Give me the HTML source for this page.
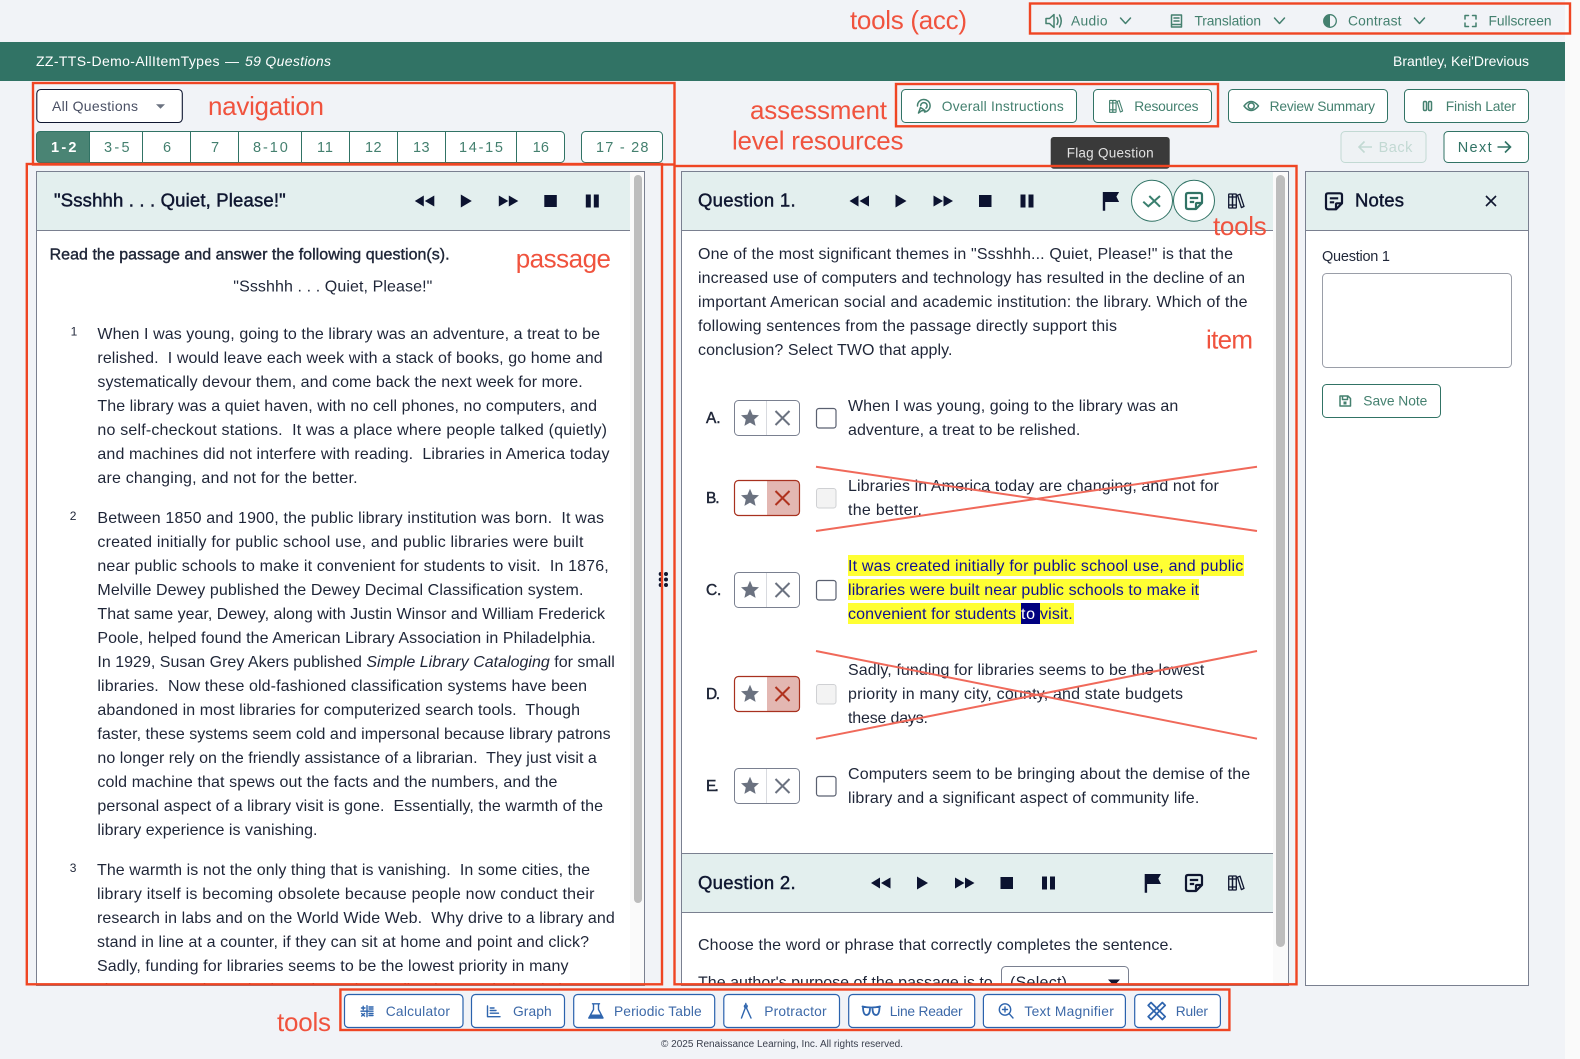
<!DOCTYPE html>
<html lang="en"><head><meta charset="utf-8"><title>ZZ-TTS-Demo-AllItemTypes</title>
<style>
html,body{margin:0;padding:0;background:#f1f3f7;overflow:hidden;width:1580px;height:1059px}
svg{display:block;font-family:"Liberation Sans",Arial,sans-serif}
text{white-space:pre}
.p{font-size:16px;fill:#1f2638}
.h{font-size:18.5px;fill:#0f1630;stroke:#0f1630;stroke-width:.45px}
.lb{font-size:15.5px;fill:#1f2638;stroke:#1f2638;stroke-width:.45px}
.w{font-size:14px;fill:#fff}
.tl{font-size:13.8px;fill:#44806f}
.pg{font-size:14.5px;fill:#44806f}
.bl{font-size:13.8px;fill:#3d69a8}
.an{font-size:26px;fill:#f0533e}
.btn{fill:#fff;stroke:#317365;stroke-width:1}
.bb{fill:#fff;stroke:#2a62ad;stroke-width:1.2}
.red{fill:none;stroke:#ef4523;stroke-width:2.4}
.i{fill:none;stroke:#44806f;stroke-width:1.5;stroke-linecap:round;stroke-linejoin:round}
.ib{fill:none;stroke:#2f65ae;stroke-width:1.4;stroke-linecap:round;stroke-linejoin:round}
.x{stroke:#f0695a;stroke-width:2;fill:none}
</style></head><body>
<svg width="1580" height="1059" viewBox="0 0 1580 1059" xmlns="http://www.w3.org/2000/svg">
<defs>
<g id="media" fill="#0c1330">
<path d="M9 -5.5 L0 0 L9 5.5Z M19.5 -5.5 L10 0 L19.5 5.5Z"/>
<path d="M46 -6.5 L57 0 L46 6.5Z"/>
<path d="M84 -5.5 L93.5 0 L84 5.5Z M94 -5.5 L103.5 0 L94 5.5Z"/>
<rect x="129.5" y="-6" width="12.5" height="12"/>
<rect x="171" y="-6.5" width="5" height="13"/><rect x="179" y="-6.5" width="5" height="13"/>
</g>
<path id="flag" d="M0 0 H16.3 L13.6 4.6 L16.3 10 H2.4 V18.7 H0Z" fill="#0c1330"/>
<g id="note" fill="none" stroke-width="2.2" stroke-linejoin="round">
<path d="M3 1 H15 Q17 1 17 3 V11 L11 17 H3 Q1 17 1 15 V3 Q1 1 3 1Z"/>
<path d="M4.8 6 H13.2 M4.8 10 H9.2"/>
<path d="M11 17 V12 Q11 11 12 11 H17"/>
</g>
<g id="books" fill="none" stroke-width="1.3" stroke-linejoin="round">
<rect x=".7" y="1" width="3.8" height="14" rx=".5"/><rect x="4.5" y="1" width="3.8" height="14" rx=".5"/>
<path d="M9.5 2.2 L12 1.2 L16 13.4 L13.4 14.6Z M.7 4 H8.3 M.7 12 H8.3"/>
</g>
<path id="star" d="M0 -9 L2.6 -3 L9 -2.5 L4.2 1.8 L5.6 8.2 L0 4.9 L-5.6 8.2 L-4.2 1.8 L-9 -2.5 L-2.6 -3Z" fill="#6b7280"/>
<clipPath id="pc"><rect x="37" y="172" width="593" height="813"/></clipPath>
<clipPath id="qc"><rect x="682" y="172" width="591" height="813"/></clipPath>
</defs>

<rect width="1580" height="1059" fill="#f1f3f7"/>
<rect x="1565" y="0" width="15" height="1059" fill="#fafafa"/>
<rect x="0" y="42" width="1565" height="39" fill="#317365"/>

<!-- top tools -->
<g>
<path class="i" d="M1046 18.5 H1049.5 L1054 14.5 V27.5 L1049.5 23.5 H1046Z M1057 17.5 Q1059 21 1057 24.5 M1059.5 15 Q1063 21 1059.5 27" />
<text class="tl" x="1071" y="25.5" textLength="36.5">Audio</text>
<path class="i" d="M1120.5 18 L1125.5 23.5 L1130.5 18"/>
<path class="i" d="M1171.5 15 H1181.5 V27 H1171.5Z M1174 18 H1179 M1174 21 H1179 M1171.5 24.5 H1181.5"/>
<text class="tl" x="1194.5" y="25.5" textLength="66.5">Translation</text>
<path class="i" d="M1274.5 18 L1279.5 23.5 L1284.5 18"/>
<circle cx="1330" cy="21" r="6.3" fill="none" stroke="#44806f" stroke-width="1.3"/><path d="M1330 14.7 A6.3 6.3 0 0 0 1330 27.3Z" fill="#44806f"/>
<text class="tl" x="1348" y="25.5" textLength="53.5">Contrast</text>
<path class="i" d="M1414.5 18 L1419.5 23.5 L1424.5 18"/>
<path class="i" d="M1465 19 V15.5 H1468.5 M1472.5 15.5 H1476 V19 M1476 23 V26.5 H1472.5 M1468.5 26.5 H1465 V23"/>
<text class="tl" x="1488.5" y="25.5" textLength="63">Fullscreen</text>
</g>

<!-- header -->
<text class="w" x="36" y="66" textLength="183.5" style="font-weight:500">ZZ-TTS-Demo-AllItemTypes</text>
<text class="w" x="225" y="66" textLength="13">—</text>
<text class="w" x="245" y="66" textLength="86" font-style="italic">59 Questions</text>
<text class="w" x="1393" y="66" textLength="136">Brantley, Kei'Drevious</text>

<!-- navigation -->
<rect x="36.8" y="89.5" width="145.5" height="33" rx="4" fill="#fff" stroke="#0f1630" stroke-width="1.1"/>
<text x="52" y="111" textLength="86" font-size="14" fill="#4a5064">All Questions</text>
<path d="M156 104.3 H165 L160.5 108.8Z" fill="#6b7280"/>

<rect x="36.5" y="131.5" width="528" height="31" rx="4" fill="#fff" stroke="#317365"/>
<path d="M40.5 131.5 H89.5 V162.5 H40.5 Q36.5 162.5 36.5 158.5 V135.5 Q36.5 131.5 40.5 131.5Z" fill="#4a8474" stroke="#317365"/>
<path d="M142.5 131.5 V162.5 M190.5 131.5 V162.5 M238.5 131.5 V162.5 M301.5 131.5 V162.5 M349.5 131.5 V162.5 M397.5 131.5 V162.5 M445.5 131.5 V162.5 M516.5 131.5 V162.5" stroke="#317365" fill="none"/>
<rect x="581.5" y="131.5" width="81" height="31" rx="4" fill="#fff" stroke="#317365"/>
<text class="pg" x="51" y="152" textLength="25.5" style="fill:#fff;font-weight:700">1-2</text>
<text class="pg" x="104" y="152" textLength="25.6">3-5</text>
<text class="pg" x="163" y="152" textLength="7.6">6</text>
<text class="pg" x="211" y="152" textLength="7.6">7</text>
<text class="pg" x="253" y="152" textLength="34.8">8-10</text>
<text class="pg" x="317" y="152" textLength="16">11</text>
<text class="pg" x="365" y="152" textLength="16.6">12</text>
<text class="pg" x="413" y="152" textLength="16.6">13</text>
<text class="pg" x="459" y="152" textLength="44">14-15</text>
<text class="pg" x="532.6" y="152" textLength="16.4">16</text>
<text class="pg" x="596" y="152" textLength="52.5">17 - 28</text>

<!-- level buttons -->
<rect class="btn" x="901.5" y="89.5" width="175" height="33" rx="4"/>
<path class="i" d="M917.5 106 A6.3 6.3 0 1 1 924.5 112 M920.7 105.5 A3.2 3.2 0 1 1 926 108.2 M918.5 113 L920.5 107.5 L925 110.5 L921.5 110.8Z"/>
<text class="tl" x="941.8" y="111" textLength="122">Overall Instructions</text>
<rect class="btn" x="1093.5" y="89.5" width="118" height="33" rx="4"/>
<use href="#books" transform="translate(1109 99.6) scale(.85)" stroke="#44806f"/>
<text class="tl" x="1134.3" y="111" textLength="64.2">Resources</text>
<rect class="btn" x="1228.5" y="89.5" width="159" height="33" rx="4"/>
<path class="i" d="M1244 106 Q1251 97 1258.5 106 Q1251 115 1244 106Z"/><circle cx="1251.2" cy="106" r="3" class="i"/>
<text class="tl" x="1269.6" y="111" textLength="105.4">Review Summary</text>
<rect class="btn" x="1404.5" y="89.5" width="124" height="33" rx="4"/>
<rect class="i" x="1423.5" y="101.5" width="3" height="9" rx="1.2"/><rect class="i" x="1428.5" y="101.5" width="3" height="9" rx="1.2"/>
<text class="tl" x="1445.8" y="111" textLength="70.2">Finish Later</text>

<rect x="1341" y="131.5" width="85" height="31" rx="4" fill="#eef2f4" stroke="#c2d9d3"/>
<path d="M1372 147 H1359 M1364.5 141.5 L1359 147 L1364.5 152.5" fill="none" stroke="#c2d9d3" stroke-width="1.6"/>
<text x="1378.6" y="152" textLength="33.8" font-size="14.5" fill="#c2d9d3">Back</text>
<rect class="btn" x="1444" y="131.5" width="84.5" height="31" rx="4"/>
<text class="pg" x="1457.7" y="152" textLength="33.9" style="fill:#317365">Next</text>
<path d="M1497.5 147 H1510.5 M1505 141.5 L1510.5 147 L1505 152.5" fill="none" stroke="#317365" stroke-width="1.6"/>

<!-- passage panel -->
<rect x="37" y="172" width="607" height="813" fill="#fff"/>
<rect x="37" y="172" width="593" height="58" fill="#e3efee"/>
<rect x="630" y="172" width="14" height="813" fill="#fafafa"/>
<rect x="634" y="175" width="8" height="728" rx="4" fill="#bdbdbd"/>
<path d="M37 230.5 H630" stroke="#7a8090"/>
<rect x="36.5" y="171.5" width="608" height="814" fill="none" stroke="#7a8090"/>
<text class="h" x="54" y="206.7" textLength="231.7">"Ssshhh . . . Quiet, Please!"</text>
<use href="#media" transform="translate(414.8 201)"/>

<g clip-path="url(#pc)" class="p">
<text class="p" x="49.6" y="259.3" textLength="400" style="stroke:#1f2638;stroke-width:.4px">Read the passage and answer the following question(s).</text>
<text class="p" x="233.3" y="291.5" textLength="199">"Ssshhh . . . Quiet, Please!"</text>
<text x="70.6" y="335.5" font-size="12" fill="#1f2638">1</text>
<text x="69.8" y="520" font-size="12" fill="#1f2638">2</text>
<text x="69.8" y="872" font-size="12" fill="#1f2638">3</text>
<text class="p" x="97.4" y="339" textLength="502.6">When I was young, going to the library was an adventure, a treat to be</text>
<text class="p" x="97.4" y="363" textLength="505.2">relished.  I would leave each week with a stack of books, go home and</text>
<text class="p" x="97.4" y="387" textLength="485.3">systematically devour them, and come back the next week for more.</text>
<text class="p" x="97.4" y="411" textLength="499.6">The library was a quiet haven, with no cell phones, no computers, and</text>
<text class="p" x="97.4" y="435" textLength="509.6">no self-checkout stations.  It was a place where people talked (quietly)</text>
<text class="p" x="97.4" y="459" textLength="512.1">and machines did not interfere with reading.  Libraries in America today</text>
<text class="p" x="97.4" y="483" textLength="260.2">are changing, and not for the better.</text>
<text class="p" x="97.4" y="523" textLength="506.6">Between 1850 and 1900, the public library institution was born.  It was</text>
<text class="p" x="97.4" y="547" textLength="486">created initially for public school use, and public libraries were built</text>
<text class="p" x="97.4" y="571" textLength="511.3">near public schools to make it convenient for students to visit.  In 1876,</text>
<text class="p" x="97.4" y="595" textLength="486">Melville Dewey published the Dewey Decimal Classification system.</text>
<text class="p" x="97.4" y="619" textLength="507.6">That same year, Dewey, along with Justin Winsor and William Frederick</text>
<text class="p" x="97.4" y="643" textLength="498.3">Poole, helped found the American Library Association in Philadelphia.</text>
<text class="p" x="97.4" y="667" textLength="517.4">In 1929, Susan Grey Akers published <tspan font-style="italic">Simple Library Cataloging</tspan> for small</text>
<text class="p" x="97.4" y="691" textLength="489.6">libraries.  Now these old-fashioned classification systems have been</text>
<text class="p" x="97.4" y="715" textLength="482.6">abandoned in most libraries for computerized search tools.  Though</text>
<text class="p" x="97.4" y="739" textLength="513.2">faster, these systems seem cold and impersonal because library patrons</text>
<text class="p" x="97.4" y="763" textLength="499.4">no longer rely on the friendly assistance of a librarian.  They just visit a</text>
<text class="p" x="97.4" y="787" textLength="460">cold machine that spews out the facts and the numbers, and the</text>
<text class="p" x="97.4" y="811" textLength="505.6">personal aspect of a library visit is gone.  Essentially, the warmth of the</text>
<text class="p" x="97.4" y="835" textLength="220.1">library experience is vanishing.</text>
<text class="p" x="97" y="875" textLength="493">The warmth is not the only thing that is vanishing.  In some cities, the</text>
<text class="p" x="97" y="899" textLength="497.5">library itself is becoming obsolete because people now conduct their</text>
<text class="p" x="97" y="923" textLength="517.8">research in labs and on the World Wide Web.  Why drive to a library and</text>
<text class="p" x="97" y="947" textLength="492">stand in line at a counter, if they can sit at home and point and click?</text>
<text class="p" x="97" y="971" textLength="471.5">Sadly, funding for libraries seems to be the lowest priority in many</text>
<text class="p" x="97" y="994.5" textLength="470">city, county, and state budgets these days.  Libraries are closing their</text>
</g>

<!-- question panel -->
<rect x="681" y="172" width="607" height="813" fill="#fff"/>
<rect x="681" y="172" width="592" height="58" fill="#e3efee"/>
<rect x="1273" y="172" width="15" height="813" fill="#fafafa"/>
<rect x="1276" y="175" width="9" height="772" rx="4.5" fill="#bdbdbd"/>
<path d="M681 230.5 H1273" stroke="#7a8090"/>
<rect x="681" y="853" width="592" height="59" fill="#e3efee"/>
<path d="M681 853.5 H1273 M681 912.5 H1273" stroke="#7a8090"/>
<rect x="681.5" y="171.5" width="607" height="814" fill="none" stroke="#7a8090"/>

<text class="h" x="698" y="206.7" textLength="97.6">Question 1.</text>
<use href="#media" transform="translate(849.5 201)"/>
<use href="#flag" x="1102.8" y="192"/>
<circle cx="1152" cy="200.7" r="20.5" fill="#fff" stroke="#317365"/>
<path d="M1143.3 201.7 L1148.3 206.3 L1160 196 M1149.3 196 L1160 206.7" fill="none" stroke="#3a7f6e" stroke-width="2"/>
<circle cx="1194" cy="200.7" r="20.5" fill="#fff" stroke="#317365"/>
<use href="#note" x="1185" y="192" stroke="#317365"/>
<use href="#books" x="1228" y="193" stroke="#0f1630"/>

<text class="p" x="698" y="259" textLength="535">One of the most significant themes in "Ssshhh... Quiet, Please!" is that the</text>
<text class="p" x="698" y="283" textLength="547">increased use of computers and technology has resulted in the decline of an</text>
<text class="p" x="698" y="307" textLength="549.5">important American social and academic institution: the library. Which of the</text>
<text class="p" x="698" y="331" textLength="419">following sentences from the passage directly support this</text>
<text class="p" x="698" y="355" textLength="254.5">conclusion? Select TWO that apply.</text>

<!-- A -->
<text class="lb" x="706" y="423" textLength="14.6">A.</text>
<rect x="734.5" y="400.5" width="65" height="35" rx="4" fill="#fff" stroke="#7a8090"/>
<path d="M766.5 401 V435" stroke="#d8dadf"/>
<use href="#star" x="750" y="417.7"/>
<path d="M775.5 411 L789.5 425 M789.5 411 L775.5 425" stroke="#6b7280" stroke-width="2"/>
<rect x="816.5" y="408.5" width="19.5" height="19.5" rx="2.5" fill="#fff" stroke="#5a6070" stroke-width="1.2"/>
<text class="p" x="848" y="411" textLength="330.3">When I was young, going to the library was an</text>
<text class="p" x="848" y="435" textLength="232.3">adventure, a treat to be relished.</text>

<!-- B -->
<text class="lb" x="706" y="503" textLength="13.5">B.</text>
<rect x="767" y="481" width="32" height="34" fill="#e3b7b2"/>
<rect x="734.5" y="480.5" width="65" height="35" rx="4" fill="none" stroke="#a8311f" stroke-width="1.2"/>
<use href="#star" x="750" y="497.7"/>
<path d="M775.5 491 L789.5 505 M789.5 491 L775.5 505" stroke="#b0321f" stroke-width="2"/>
<rect x="816.5" y="488.5" width="19.5" height="19.5" rx="2.5" fill="#f3f3f3" stroke="#cfd0d3"/>
<text class="p" x="848" y="491" textLength="370.8">Libraries in America today are changing, and not for</text>
<text class="p" x="848" y="515" textLength="74">the better.</text>
<path class="x" d="M816 466.7 L1257 531 M816 531 L1257 466.7"/>

<!-- C -->
<text class="lb" x="706" y="595" textLength="15.3">C.</text>
<rect x="734.5" y="572.5" width="65" height="35" rx="4" fill="#fff" stroke="#7a8090"/>
<path d="M766.5 573 V607" stroke="#d8dadf"/>
<use href="#star" x="750" y="589.7"/>
<path d="M775.5 583 L789.5 597 M789.5 583 L775.5 597" stroke="#6b7280" stroke-width="2"/>
<rect x="816.5" y="580.5" width="19.5" height="19.5" rx="2.5" fill="#fff" stroke="#5a6070" stroke-width="1.2"/>
<rect x="848" y="555" width="396" height="21" fill="#ffff33"/>
<rect x="848" y="579" width="351" height="21" fill="#ffff33"/>
<rect x="848" y="603" width="226" height="21" fill="#ffff33"/>
<rect x="1021" y="603" width="19" height="21" fill="#000080"/>
<text class="p" style="fill:#101094" x="848" y="571" textLength="395.3">It was created initially for public school use, and public</text>
<text class="p" style="fill:#101094" x="848" y="595" textLength="351">libraries were built near public schools to make it</text>
<text class="p" style="fill:#101094" x="848" y="619" textLength="168">convenient for students</text>
<text class="p" style="fill:#fff" x="1021" y="619" textLength="14">to</text>
<text class="p" style="fill:#101094" x="1040" y="619" textLength="32.7">visit.</text>

<!-- D -->
<text class="lb" x="706" y="699" textLength="14">D.</text>
<rect x="767" y="677" width="32" height="34" fill="#e3b7b2"/>
<rect x="734.5" y="676.5" width="65" height="35" rx="4" fill="none" stroke="#a8311f" stroke-width="1.2"/>
<use href="#star" x="750" y="693.7"/>
<path d="M775.5 687 L789.5 701 M789.5 687 L775.5 701" stroke="#b0321f" stroke-width="2"/>
<rect x="816.5" y="684.5" width="19.5" height="19.5" rx="2.5" fill="#f3f3f3" stroke="#cfd0d3"/>
<text class="p" x="848" y="675" textLength="356.3">Sadly, funding for libraries seems to be the lowest</text>
<text class="p" x="848" y="699" textLength="335">priority in many city, county, and state budgets</text>
<text class="p" x="848" y="723" textLength="80">these days.</text>
<path class="x" d="M816 651 L1257 738.7 M816 738.7 L1257 651"/>

<!-- E -->
<text class="lb" x="706" y="791" textLength="12.8">E.</text>
<rect x="734.5" y="768.5" width="65" height="35" rx="4" fill="#fff" stroke="#7a8090"/>
<path d="M766.5 769 V803" stroke="#d8dadf"/>
<use href="#star" x="750" y="785.7"/>
<path d="M775.5 779 L789.5 793 M789.5 779 L775.5 793" stroke="#6b7280" stroke-width="2"/>
<rect x="816.5" y="776.5" width="19.5" height="19.5" rx="2.5" fill="#fff" stroke="#5a6070" stroke-width="1.2"/>
<text class="p" x="848" y="779" textLength="402.2">Computers seem to be bringing about the demise of the</text>
<text class="p" x="848" y="803" textLength="351.3">library and a significant aspect of community life.</text>

<!-- Q2 -->
<text class="h" x="698" y="889" textLength="97.6">Question 2.</text>
<use href="#media" transform="translate(871 883)"/>
<use href="#flag" x="1144.7" y="874"/>
<use href="#note" x="1185" y="874" stroke="#0f1630"/>
<use href="#books" x="1228" y="875" stroke="#0f1630"/>
<g clip-path="url(#qc)">
<text class="p" x="698" y="950" textLength="475">Choose the word or phrase that correctly completes the sentence.</text>
<text class="p" x="698" y="987.5" textLength="294.7">The author's purpose of the passage is to</text>
<rect x="1001.5" y="966.5" width="127" height="30" rx="4" fill="#fff" stroke="#7a8090"/>
<text class="p" x="1010" y="987.5" textLength="57">(Select)</text>
<path d="M1108 979.5 H1120 L1114 986Z" fill="#0f1630"/>
</g>

<!-- grip -->
<g fill="#0f1630"><circle cx="660.7" cy="574" r="2"/><circle cx="666" cy="574" r="2"/><circle cx="660.7" cy="579.5" r="2"/><circle cx="666" cy="579.5" r="2"/><circle cx="660.7" cy="585" r="2"/><circle cx="666" cy="585" r="2"/></g>

<!-- notes -->
<rect x="1306" y="172" width="222" height="813" fill="#fff"/>
<rect x="1306" y="172" width="222" height="58" fill="#e3efee"/>
<path d="M1306 230.5 H1528" stroke="#7a8090"/>
<rect x="1305.5" y="171.5" width="223" height="814" fill="none" stroke="#7a8090"/>
<use href="#note" x="1325" y="192.3" stroke="#0f1630"/>
<text class="h" x="1355" y="206.3" textLength="49">Notes</text>
<path d="M1486 196 L1496 206 M1496 196 L1486 206" stroke="#0f1630" stroke-width="1.6"/>
<text class="p" x="1322" y="261" textLength="68" style="font-size:14.5px">Question 1</text>
<rect x="1322.5" y="273.5" width="189" height="94" rx="4" fill="#fff" stroke="#9a9ea8"/>
<rect class="btn" x="1322.5" y="384.5" width="118" height="33" rx="4"/>
<path class="i" d="M1340 396 H1348 L1350.5 398.5 V406 H1340Z M1342.5 396 V399.5 H1347.5 V396"/><rect x="1343.5" y="401.5" width="3" height="3" fill="#44806f"/>
<text class="tl" x="1363.3" y="405.7" textLength="64">Save Note</text>

<!-- tooltip -->
<rect x="1050.7" y="137" width="119" height="31.7" rx="3" fill="#3a3a3a"/>
<text x="1066.7" y="157.3" textLength="87" font-size="13.5" fill="#e2e2e2">Flag Question</text>

<!-- bottom tools -->
<rect class="bb" x="344.5" y="994.5" width="118.5" height="33" rx="4"/>
<path class="ib" d="M367 1005.7 V1016.7 M361 1011.2 H373 M361.5 1008 H365 M363.2 1006.3 V1009.7 M369 1007 H373 M369 1009 H373 M361.7 1013.5 L364.5 1016 M364.5 1013.5 L361.7 1016 M369 1013.5 H373 M369 1015.5 H373"/>
<text class="bl" x="385.7" y="1016" textLength="64.3">Calculator</text>
<rect class="bb" x="471.5" y="994.5" width="93" height="33" rx="4"/>
<path class="ib" d="M487.5 1006 V1016.7 H500 M490.3 1008 H494 M490.3 1010.5 H496 M490.3 1013.2 H498.5"/>
<text class="bl" x="513" y="1016" textLength="38.7">Graph</text>
<rect class="bb" x="573.7" y="994.5" width="141" height="33" rx="4"/>
<path class="ib" d="M592.5 1003.8 H599.5 M593.5 1003.8 V1009.5 L588.8 1018 H603 L598.5 1009.5 V1003.8"/><path d="M590.5 1014.5 H601 L603 1018 H588.8Z" fill="#2f65ae"/>
<text class="bl" x="614" y="1016" textLength="87.7">Periodic Table</text>
<rect class="bb" x="723.8" y="994.5" width="115.7" height="33" rx="4"/>
<path class="ib" d="M745.8 1006.5 L741.5 1018 M745.8 1006.5 L751 1018 M745.8 1003.5 V1005"/><circle class="ib" cx="745.8" cy="1006.3" r="1.4"/>
<text class="bl" x="764.2" y="1016" textLength="62.4">Protractor</text>
<rect class="bb" x="848.7" y="994.5" width="126" height="33" rx="4"/>
<path class="ib" style="stroke-width:1.8" d="M862.5 1006.5 Q871.3 1008.5 880 1006.5 M863 1006.5 Q863 1015 866.5 1015 Q870 1015 870 1008 M879.5 1006.5 Q879.5 1015 876 1015 Q872.5 1015 872.5 1008"/>
<text class="bl" x="889.7" y="1016" textLength="72.9">Line Reader</text>
<rect class="bb" x="983.4" y="994.5" width="142" height="33" rx="4"/>
<circle class="ib" cx="1005" cy="1009.5" r="5.7"/><path class="ib" d="M1009.2 1013.7 L1013 1018 M1005 1007 V1012 M1002.5 1009.5 H1007.5"/>
<text class="bl" x="1024.4" y="1016" textLength="89.4">Text Magnifier</text>
<rect class="bb" x="1134.7" y="994.5" width="85.7" height="33" rx="4"/>
<g fill="none" stroke="#2f65ae" stroke-width="1.7" stroke-linejoin="round">
<rect x="1154.7" y="1001" width="4" height="20" transform="rotate(-45 1156.7 1011)"/>
<rect x="1154.7" y="1001" width="4" height="20" transform="rotate(45 1156.7 1011)"/>
</g>
<text class="bl" x="1175.7" y="1016" textLength="32.3">Ruler</text>

<text x="661" y="1047" textLength="242" font-size="10" fill="#3a3f4d">© 2025 Renaissance Learning, Inc. All rights reserved.</text>

<!-- annotations -->
<rect class="red" x="1030" y="3.5" width="540" height="30"/>
<rect class="red" x="33" y="83" width="641.5" height="81.5"/>
<rect class="red" x="896" y="84" width="322" height="42.3"/>
<rect class="red" x="26.8" y="164" width="635.2" height="820.3"/>
<rect class="red" x="674.5" y="166" width="622" height="818.3"/>
<rect class="red" x="340.4" y="989.5" width="889" height="40.5"/>
<text class="an" x="850" y="29" textLength="117">tools (acc)</text>
<text class="an" x="208" y="115" textLength="116">navigation</text>
<text class="an" x="750" y="119" textLength="137">assessment</text>
<text class="an" x="732" y="149.3" textLength="171.5">level resources</text>
<text class="an" x="515.7" y="267.5" textLength="95.3">passage</text>
<text class="an" x="1213" y="235" textLength="53.7">tools</text>
<text class="an" x="1206" y="348.5" textLength="47">item</text>
<text class="an" x="277" y="1031" textLength="54">tools</text>
</svg>
</body></html>
